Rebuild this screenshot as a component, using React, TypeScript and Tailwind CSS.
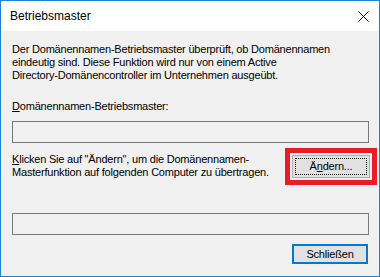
import React from "react";

const font = { fontFamily: '"Liberation Sans", Arial, sans-serif' };

function TextBox() {
  return <div className="h-[22px] w-full border border-[#7a7a7a] bg-[#f0f0f0]" />;
}

export default function App() {
  return (
    <div
      className="flex h-[277px] w-[380px] flex-col border border-[#1883d7] bg-[#f0f0f0] text-[11px] leading-[13px] text-black"
      style={font}
    >
      {/* Title bar */}
      <div className="flex h-[30px] shrink-0 items-center justify-between bg-white pl-[9px] pr-[10px]">
        <span className="text-[12px] leading-[14px]">Betriebsmaster</span>
        <svg width="11" height="11" viewBox="0 0 11 11" className="mt-[1px]">
          <path d="M0.5 0.5 L10.5 10.5 M10.5 0.5 L0.5 10.5" stroke="#000" strokeWidth="1" />
        </svg>
      </div>

      {/* Body */}
      <div className="flex flex-1 flex-col pl-[11px] pr-[10px] pt-[12px] tracking-[-0.2px]">
        <p>
          Der Domänennamen-Betriebsmaster überprüft, ob Domänennamen
          <br />
          eindeutig sind. Diese Funktion wird nur von einem Active
          <br />
          Directory-Domänencontroller im Unternehmen ausgeübt.
        </p>

        <p className="mt-[18px]">
          <span className="underline">D</span>omänennamen-Betriebsmaster:
        </p>
        <div className="mt-[8px]">
          <TextBox />
        </div>

        <div className="mt-[5px] flex items-start justify-between">
          <p className="mt-[5px]">
            <span className="underline">K</span>licken Sie auf "Ändern", um die Domänennamen-
            <br />
            Masterfunktion auf folgenden Computer zu übertragen.
          </p>
          <div className="-mr-[8px] border-[5px] border-[#ed1c24] p-[2px]">
            <button className="flex h-[23px] w-[78px] items-center justify-center border border-[#adadad] bg-[#e1e1e1] p-[2px]">
              <span className="flex h-full w-full items-center justify-center border border-dotted border-black">
                Ä<span className="underline">n</span>dern...
              </span>
            </button>
          </div>
        </div>

        <div className="mt-[28px]">
          <TextBox />
        </div>

        <div className="mt-[9px] flex justify-end pr-[1px]">
          <button className="h-[20px] w-[76px] border-2 border-[#0078d7] bg-[#e1e1e1] leading-[14px]">
            Schließen
          </button>
        </div>
      </div>
    </div>
  );
}
